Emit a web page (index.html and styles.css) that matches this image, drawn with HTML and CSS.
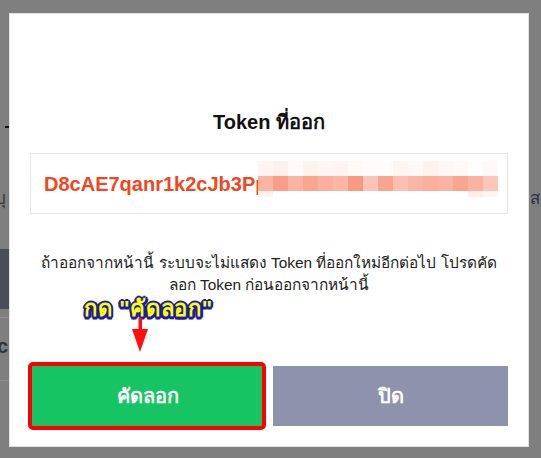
FILE: index.html
```html
<!DOCTYPE html>
<html lang="th">
<head>
<meta charset="utf-8">
<link rel="stylesheet" href="styles.css">
</head>
<body>
<div class="page">
  <div class="bg-dash"></div>
  <div class="bg-row"><span class="bg-left">บุ</span><span class="bg-right">ส</span></div>
  <div class="bg-bar"></div>
  <div class="bg-line"></div>
  <div class="bg-c">c</div>
  <div class="bg-line bg-line2"></div>
</div>
<div class="modal">
  <h2 class="title">Token ที่ออก</h2>
  <div class="token-box">
    <span class="token-text">D8cAE7qanr1k2cJb3Pp</span>
    <div class="blur">
      <div class="blur-row faint">
        <i style="background:#fff4f1"></i><i style="background:#fef1ed"></i><i style="background:#fffbfa"></i><i style="background:#fef3ef"></i><i style="background:#fff6f3"></i><i style="background:#fef4f1"></i><i style="background:#fffaf8"></i><i style="background:#fffcfb"></i><i style="background:#fffcfb"></i><i style="background:#fef4f2"></i><i style="background:#fff8f6"></i><i style="background:#fef2ee"></i><i style="background:#fff7f5"></i><i style="background:#fff9f8"></i><i style="background:#fffefe"></i><i style="background:#fffafa"></i>
      </div>
      <div class="blur-row main">
        <i style="background:#fbb3a2"></i><i style="background:#f99f89"></i><i style="background:#fbb4a2"></i><i style="background:#f9a58f"></i><i style="background:#fab09d"></i><i style="background:#fbb6a4"></i><i style="background:#f89a82"></i><i style="background:#fcc4b6"></i><i style="background:#f9a48f"></i><i style="background:#fcbfb0"></i><i style="background:#fbb5a3"></i><i style="background:#fbaf9c"></i><i style="background:#fbb4a2"></i><i style="background:#f9a690"></i><i style="background:#fbb2a0"></i><i style="background:#fcc6b8"></i>
      </div>
      <div class="blur-row low">
        <i style="background:#fff3f0"></i><i></i><i></i><i></i><i></i><i></i><i></i><i></i><i></i><i></i><i></i><i></i><i></i><i></i><i style="background:#fdeeea"></i><i style="background:#fef4f1"></i>
      </div>
    </div>
  </div>
  <p class="desc">ถ้าออกจากหน้านี้ ระบบจะไม่แสดง Token ที่ออกใหม่อีกต่อไป โปรดคัดลอก Token ก่อนออกจากหน้านี้</p>
  <div class="hint">
    <span class="hint-text">กด "คัดลอก"</span>
    <svg class="arrow" width="18" height="36" viewBox="0 0 18 36">
      <rect x="7.5" y="0" width="3.5" height="12" fill="#ff1010"/>
      <polygon points="1,11 17,11 9,34" fill="#ff1010"/>
    </svg>
  </div>
  <div class="actions">
    <button class="btn btn-copy">คัดลอก<span class="mark"></span></button>
    <button class="btn btn-close">ปิด</button>
  </div>
</div>
</body>
</html>
```
FILE: styles.css
```css
* { box-sizing: border-box; }
html, body { margin: 0; padding: 0; }
body {
  width: 541px;
  height: 458px;
  background: #7f7f7f;
  font-family: Tahoma, "Liberation Sans", "Noto Sans", sans-serif;
  overflow: hidden;
  position: relative;
}
.page { position: relative; height: 458px; }
.bg-dash { position: absolute; left: 5px; top: 126px; width: 4px; height: 2px; background: #111; }
.bg-row { position: absolute; top: 184px; left: 0; width: 541px; height: 20px; font-size: 17px; color: #2e3340; }
.bg-left { position: absolute; left: -5px; }
.bg-right { position: absolute; left: 530px; }
.bg-bar { position: absolute; left: 0; top: 249px; width: 12px; height: 60px; background: #4a4c5a; }
.bg-line { position: absolute; left: 0; top: 317px; width: 12px; height: 1px; background: #8e8e8e; }
.bg-line2 { top: 380px; }
.bg-c { position: absolute; left: -3px; top: 335px; font-size: 20px; font-weight: bold; color: #2e3340; font-family: "Liberation Sans", sans-serif; }

.modal {
  position: absolute;
  left: 9px;
  top: 13px;
  width: 520px;
  height: 434px;
  background: #fff;
  border: 1px solid #e2e2e2;
  padding: 95px 20px 0;
  display: flex;
  flex-direction: column;
}
.title {
  margin: 0;
  font-size: 20px;
  line-height: 26px;
  font-weight: bold;
  text-align: center;
  color: #111;
  font-family: "Liberation Sans", Tahoma, sans-serif;
}
.token-box {
  margin-top: 18px;
  height: 61px;
  border: 1px solid #e6e6e6;
  position: relative;
  overflow: hidden;
  padding-left: 13px;
  display: flex;
  align-items: center;
}
.token-text {
  font-family: "Liberation Sans", sans-serif;
  font-weight: bold;
  font-size: 20px;
  color: #f2461f;
  line-height: 24px;
}
.blur {
  position: absolute;
  left: 227px;
  top: 7px;
  display: flex;
  flex-direction: column;
}
.blur-row { display: flex; }
.blur-row i { display: block; width: 15px; background: #fff; }
.blur-row.faint i { height: 15px; }
.blur-row.main i { height: 15px; }
.blur-row.low i { height: 6px; }
.desc {
  margin: 38px 0 0;
  text-align: center;
  font-size: 15.4px;
  line-height: 22px;
  color: #222;
  padding: 0 8px;
}
.hint {
  position: relative;
  height: 70px;
}
.hint-text {
  position: absolute;
  left: 54px;
  top: -5px;
  font-size: 22px;
  font-weight: 900;
  color: #ffff00;
  font-family: Tahoma, "Liberation Sans", sans-serif;
  letter-spacing: 0.7px;
  text-shadow:
    2px 0 0 #1b1ba8, -2px 0 0 #1b1ba8, 0 2px 0 #1b1ba8, 0 -2px 0 #1b1ba8,
    1.5px 1.5px 0 #1b1ba8, -1.5px 1.5px 0 #1b1ba8, 1.5px -1.5px 0 #1b1ba8, -1.5px -1.5px 0 #1b1ba8,
    2.5px 1px 0 #1b1ba8, -2.5px 1px 0 #1b1ba8, 1px 2.5px 0 #1b1ba8, -1px 2.5px 0 #1b1ba8;
}
.arrow {
  position: absolute;
  left: 101px;
  top: 22px;
}
.actions {
  display: flex;
  gap: 8px;
  height: 60px;
}
.btn {
  flex: 1;
  border: 0;
  font-family: Tahoma, "Liberation Sans", sans-serif;
  font-size: 20px;
  font-weight: bold;
  color: #fff;
  position: relative;
  padding: 0;
}
.btn-copy { background: #17c463; }
.btn-close { background: #8e92ac; }
.mark {
  position: absolute;
  left: -2px;
  top: -4px;
  right: -1px;
  bottom: -4px;
  border: 4px solid #ff0000;
  border-radius: 5px;
}
```
